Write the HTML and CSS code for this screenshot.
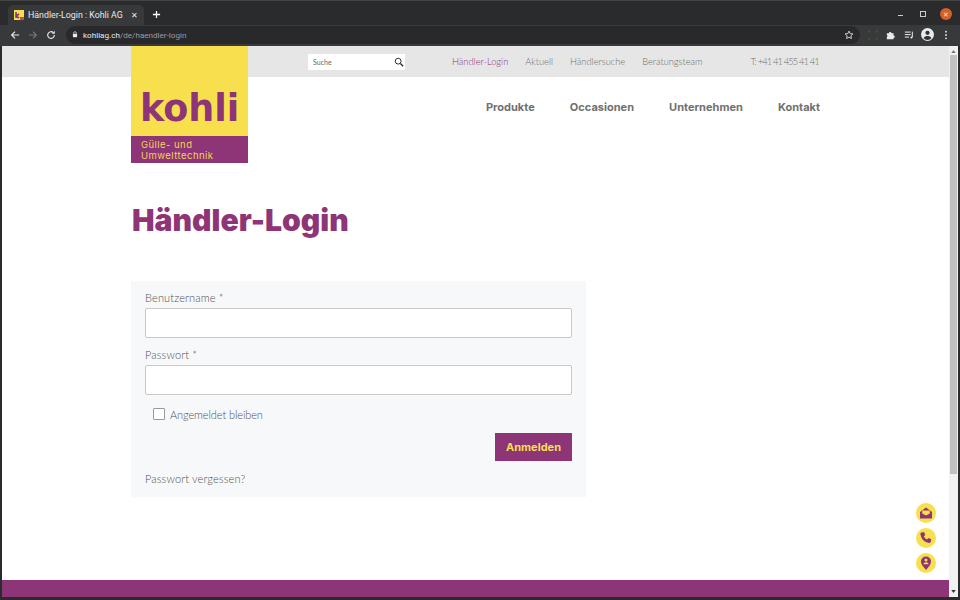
FILE: index.html
```html
<!DOCTYPE html>
<html lang="de">
<head>
  <meta charset="UTF-8" />
  <title>Händler-Login : Kohli AG</title>
  <link rel="stylesheet" href="styles.css">
</head>
<body>
  <div class="browser">
    <div class="tabbar">
      <div class="tab">
        <svg class="favicon" viewBox="0 0 10 10"><rect width="10" height="10" fill="#f7df4e"/><path d="M2 2v6M2 6l3-2M2 6l3 2" stroke="#8e3577" stroke-width="1.6" fill="none"/><rect x="6" y="7" width="4" height="3" fill="#c8562a"/></svg>
        <span class="tab-title">Händler-Login : Kohli AG</span>
        <span class="tab-close">✕</span>
      </div>
      <svg class="new-tab" viewBox="0 0 10 10"><path d="M5 1v8M1 5h8" stroke="#fff" stroke-width="1.4"/></svg>
      <div class="window-controls">
        <span class="win-min"></span>
        <span class="win-max"></span>
        <span class="win-close">✕</span>
      </div>
    </div>

    <div class="toolbar">
      <svg class="tool" viewBox="0 0 12 12"><path d="M11 6H2M6 2L2 6l4 4" stroke="#e8eaed" stroke-width="1.4" fill="none"/></svg>
      <svg class="tool" viewBox="0 0 12 12"><path d="M1 6h9M6 2l4 4-4 4" stroke="#77797c" stroke-width="1.4" fill="none"/></svg>
      <svg class="tool" viewBox="0 0 12 12"><path d="M10 6a4 4 0 1 1-1.2-2.8" stroke="#e8eaed" stroke-width="1.4" fill="none"/><path d="M10.5 1v3.5H7z" fill="#e8eaed"/></svg>
      <div class="omnibox">
        <svg class="lock" viewBox="0 0 8 10"><path d="M2 4V3a2 2 0 0 1 4 0v1" stroke="#e8eaed" fill="none"/><rect x="1" y="4" width="6" height="5" rx="1" fill="#e8eaed"/></svg>
        <span class="url"><b>kohliag.ch</b>/de/haendler-login</span>
        <svg class="star" viewBox="0 0 12 12"><path d="M6 1.3l1.4 3 3.3.4-2.4 2.2.6 3.3L6 8.6l-2.9 1.6.6-3.3L1.300 4.700l3.300-.4z" stroke="#e8eaed" fill="none"/></svg>
      </div>
      <svg class="tool-right" viewBox="0 0 12 12"><path d="M1 3V1h2M9 1h2v2M11 9v2H9M3 11H1V9" stroke="#3f6b35" fill="none"/></svg>
      <svg class="tool-right" viewBox="0 0 12 12"><path d="M1 4h2.500a1.500 1.500 0 0 1 3 0H9v2.500a1.500 1.500 0 0 1 0 3V11H1V8.500a1.500 1.500 0 0 0 0-2.500z" fill="#e8eaed"/></svg>
      <svg class="tool-right" viewBox="0 0 12 12"><path d="M1 2.500h7M1 5.500h7M1 8.500h5" stroke="#e8eaed" stroke-width="1.200"/><path d="M10 2v6.500" stroke="#e8eaed" stroke-width="1.200"/><circle cx="9" cy="9" r="1.300" fill="#e8eaed"/></svg>
      <svg class="avatar" viewBox="0 0 14 14"><circle cx="7" cy="7" r="7" fill="#e8eaed"/><circle cx="7" cy="5.200" r="2.300" fill="#333"/><path d="M2.800 11c1-1.800 2.500-2.300 4.200-2.300s3.200.5 4.200 2.300a5.500 5.500 0 0 1-8.400 0z" fill="#333"/></svg>
      <svg class="menu-dots" viewBox="0 0 4 12"><circle cx="2" cy="2" r="1.100" fill="#e8eaed"/><circle cx="2" cy="6" r="1.100" fill="#e8eaed"/><circle cx="2" cy="10" r="1.100" fill="#e8eaed"/></svg>
    </div>

    <div class="viewport">
      <div class="page">
        <div class="topbar">
          <div class="search">
            <span>Suche</span>
            <svg class="search-icon" viewBox="0 0 12 12"><circle cx="5" cy="5" r="3.500" stroke="#333" stroke-width="1.200" fill="none"/><path d="M7.700 7.700L11 11" stroke="#333" stroke-width="1.800"/></svg>
          </div>
          <nav class="meta-nav">
            <a class="active" href="#">Händler-Login</a>
            <a href="#">Aktuell</a>
            <a href="#">Händlersuche</a>
            <a href="#">Beratungsteam</a>
          </nav>
          <span class="phone">T: +41 41 455 41 41</span>
        </div>

        <a class="logo" href="#">
          <span class="logo-name">kohli</span>
          <span class="logo-claim">Gülle- und<br>Umwelttechnik</span>
        </a>

        <nav class="main-nav">
          <a href="#">Produkte</a>
          <a href="#">Occasionen</a>
          <a href="#">Unternehmen</a>
          <a href="#">Kontakt</a>
        </nav>

        <main class="content">
          <h1>Händler-Login</h1>
          <form class="login">
            <label class="field-label">Benutzername *</label>
            <div class="input"></div>
            <label class="field-label">Passwort *</label>
            <div class="input"></div>
            <div class="remember">
              <span class="checkbox"></span>
              <span>Angemeldet bleiben</span>
            </div>
            <div class="actions"><span class="submit">Anmelden</span></div>
            <a class="forgot" href="#">Passwort vergessen?</a>
          </form>
        </main>

        <footer class="footer"></footer>

        <div class="quick">
          <span class="quick-btn"><svg viewBox="0 0 14 14"><path d="M1 6l6-4.500L13 6v6.500H1z" fill="#8e3577"/><path d="M3.200 4.500h7.600v3L7 9.500l-3.800-2z" fill="#f7df4e"/></svg></span>
          <span class="quick-btn"><svg viewBox="0 0 14 14"><path d="M2.500 1.500l2.500-.5 1.300 3-1.500 1.200c.6 1.500 1.800 2.700 3.300 3.300l1.200-1.500 3 1.300-.5 2.500c-.2.800-1 1.200-1.800 1.100C5.500 11.500 2.500 8.500 1.400 3.300c-.1-.8.300-1.600 1.100-1.800z" fill="#8e3577"/></svg></span>
          <span class="quick-btn"><svg viewBox="0 0 14 14"><path d="M7 14C4 10.500 2 8 2 5.500a5 5 0 0 1 10 0C12 8 10 10.500 7 14z" fill="#8e3577"/><circle cx="7" cy="4" r="1.500" fill="#f7df4e"/><path d="M4.500 8.200c0-1.300 1.100-2 2.500-2s2.500.7 2.500 2z" fill="#f7df4e"/></svg></span>
        </div>
      </div>

      <div class="scrollbar">
        <svg class="arrow" viewBox="0 0 6 4"><path d="M3 0l3 4H0z" fill="#777"/></svg>
        <div class="thumb"></div>
        <svg class="arrow" viewBox="0 0 6 4"><path d="M3 4L0 0h6z" fill="#333"/></svg>
      </div>
    </div>
  </div>
</body>
</html>
```

FILE: styles.css
```css
:root {
  --purple: #8e3577;
  --yellow: #f7df4e;
  --grey: #707070;
  --chrome: #2a2b2c;
  --toolbar: #38393a;
}

html, body {
  margin: 0;
  height: 100%;
  overflow: hidden;
}

a {
  text-decoration: none;
  color: inherit;
}

.browser {
  display: flex;
  flex-direction: column;
  width: 960px;
  height: 600px;
  background: var(--chrome);
  font-family: "Lato", sans-serif;
}

/* window chrome */
.tabbar {
  display: flex;
  align-items: flex-end;
  height: 25px;
  flex: none;
  box-sizing: border-box;
  padding-left: 8px;
  border-top: 1px solid #444;
}

.tab {
  display: flex;
  align-items: center;
  width: 136px;
  height: 20px;
  box-sizing: border-box;
  padding: 0 6px;
  background: var(--toolbar);
  border-radius: 5px 5px 0 0;
  color: #e8eaed;
  font: 8.800px "Roboto", sans-serif;
}

.favicon {
  width: 10px;
  height: 10px;
  margin-right: 4px;
}

.tab-title {
  flex: 1;
  white-space: nowrap;
}

.tab-close {
  font-size: 8px;
}

.new-tab {
  width: 9px;
  height: 9px;
  margin: 0 0 6px 8px;
}

.window-controls {
  display: flex;
  align-items: center;
  margin-left: auto;
  margin-bottom: 5px;
  padding-right: 8px;
  gap: 14px;
}

.win-min {
  width: 5px;
  height: 1px;
  margin: 3px 3px 0 0;
  background: #ccc;
}

.win-max {
  width: 4px;
  height: 4px;
  border: 1px solid #ccc;
}

.win-close {
  display: flex;
  align-items: center;
  justify-content: center;
  width: 12px;
  height: 12px;
  border-radius: 50%;
  background: #d2622a;
  color: #f3e0d0;
  font-size: 7px;
}

.toolbar {
  display: flex;
  align-items: center;
  height: 21px;
  flex: none;
  box-sizing: border-box;
  padding: 0 10px 2px;
  background: var(--toolbar);
}

.tool {
  width: 10px;
  height: 10px;
  margin-right: 8px;
}

.omnibox {
  display: flex;
  align-items: center;
  width: 794px;
  height: 18px;
  margin-left: 2px;
  box-sizing: border-box;
  padding: 0 6px;
  background: #29292b;
  border-radius: 9px;
  font: 8.100px "Roboto", sans-serif;
  color: #9a9b9d;
}

.url b {
  font-weight: 400;
  color: #e8eaed;
}

.lock {
  width: 6px;
  height: 7px;
  margin-right: 5px;
}

.star {
  width: 10px;
  height: 10px;
  margin-left: auto;
}

.tool-right {
  width: 10px;
  height: 10px;
  margin-left: 8px;
}

.avatar {
  width: 13px;
  height: 13px;
  margin-left: 7px;
}

.menu-dots {
  width: 4px;
  height: 10px;
  margin-left: 10px;
}

/* page */
.viewport {
  display: flex;
  flex: 1;
  min-height: 0;
  padding: 0 2px 3px;
}

.page {
  position: relative;
  display: flex;
  flex-direction: column;
  flex: 1;
  background: #fff;
  overflow: hidden;
}

.topbar {
  display: flex;
  align-items: center;
  height: 31px;
  flex: none;
  box-sizing: border-box;
  padding-left: 306px;
  background: #e6e6e6;
  font-size: 9.300px;
  font-weight: 300;
  color: #6e6e6e;
}

.search {
  display: flex;
  align-items: center;
  justify-content: space-between;
  width: 97px;
  height: 16px;
  box-sizing: border-box;
  padding: 0 1px 0 5px;
  background: #fff;
  font-size: 7px;
  font-weight: 400;
  color: #666;
}

.search-icon {
  width: 10px;
  height: 10px;
}

.meta-nav {
  display: flex;
  gap: 17px;
  margin-left: 47px;
}

.meta-nav .active {
  color: var(--purple);
}

.phone {
  margin-left: 48px;
  letter-spacing: -.85px;
}

.logo {
  position: absolute;
  top: 0;
  left: 129px;
  display: flex;
  flex-direction: column;
  justify-content: flex-end;
  width: 117px;
  height: 117px;
  background: var(--yellow);
}

.logo-name {
  padding: 0 0 0 9px;
  color: var(--purple);
  font: 700 36.500px/40px "DejaVu Sans", sans-serif;
}

.logo-claim {
  height: 27px;
  box-sizing: border-box;
  margin-top: 7px;
  padding: 3px 0 0 10px;
  background: var(--purple);
  color: #f3d354;
  font: 400 9.500px/11px "Inter", sans-serif;
  letter-spacing: .45px;
}

.main-nav {
  display: flex;
  justify-content: flex-end;
  gap: 35px;
  height: 58px;
  flex: none;
  box-sizing: border-box;
  padding: 23px 129px 0 0;
  color: var(--grey);
  font: 700 11px/14px "Inter", sans-serif;
  letter-spacing: .02px;
}

.content {
  flex: 1;
  padding-left: 129px;
}

h1 {
  margin: 67px 0 43px 1px;
  color: var(--purple);
  font: 900 30.100px/36px "Inter", sans-serif;
}

.login {
  width: 455px;
  box-sizing: border-box;
  padding: 11px 14px 11px;
  background: #f7f8fa;
  font-size: 11px;
  font-weight: 300;
  color: #505050;
}

.field-label {
  display: block;
  height: 16px;
  line-height: 12px;
  letter-spacing: .15px;
}

.input {
  height: 30px;
  margin-bottom: 11px;
  box-sizing: border-box;
  background: #fff;
  border: 1px solid #c9c9c9;
  border-radius: 2px;
}

.remember {
  display: flex;
  align-items: center;
  gap: 5px;
  padding-left: 8px;
  margin-top: 3px;
  height: 16px;
  letter-spacing: -.1px;
}

.checkbox {
  width: 10px;
  height: 10px;
  background: #fff;
  border: 1px solid #999;
  border-radius: 1px;
}

.actions {
  display: flex;
  justify-content: flex-end;
  margin-top: 11px;
}

.submit {
  display: flex;
  align-items: center;
  justify-content: center;
  width: 77px;
  height: 28px;
  background: var(--purple);
  color: var(--yellow);
  font: 700 11px "Inter", sans-serif;
}

.forgot {
  display: block;
  margin-top: 11px;
  line-height: 14px;
  letter-spacing: .15px;
}

.footer {
  height: 17px;
  flex: none;
  background: var(--purple);
}

.quick {
  position: absolute;
  right: 13px;
  bottom: 24px;
  display: flex;
  flex-direction: column;
  gap: 5px;
}

.quick-btn {
  display: flex;
  align-items: center;
  justify-content: center;
  width: 20px;
  height: 20px;
  border-radius: 50%;
  background: var(--yellow);
}

.quick-btn svg {
  width: 14px;
  height: 14px;
}

.scrollbar {
  display: flex;
  flex-direction: column;
  align-items: center;
  justify-content: space-between;
  width: 9px;
  padding: 4px 0;
  box-sizing: border-box;
  background: #f1f1f1;
}

.arrow {
  width: 5px;
  height: 3px;
  flex: none;
}

.thumb {
  width: 7px;
  height: 419px;
  margin: 2px 0 auto;
  background: #c1c1c1;
}
```
